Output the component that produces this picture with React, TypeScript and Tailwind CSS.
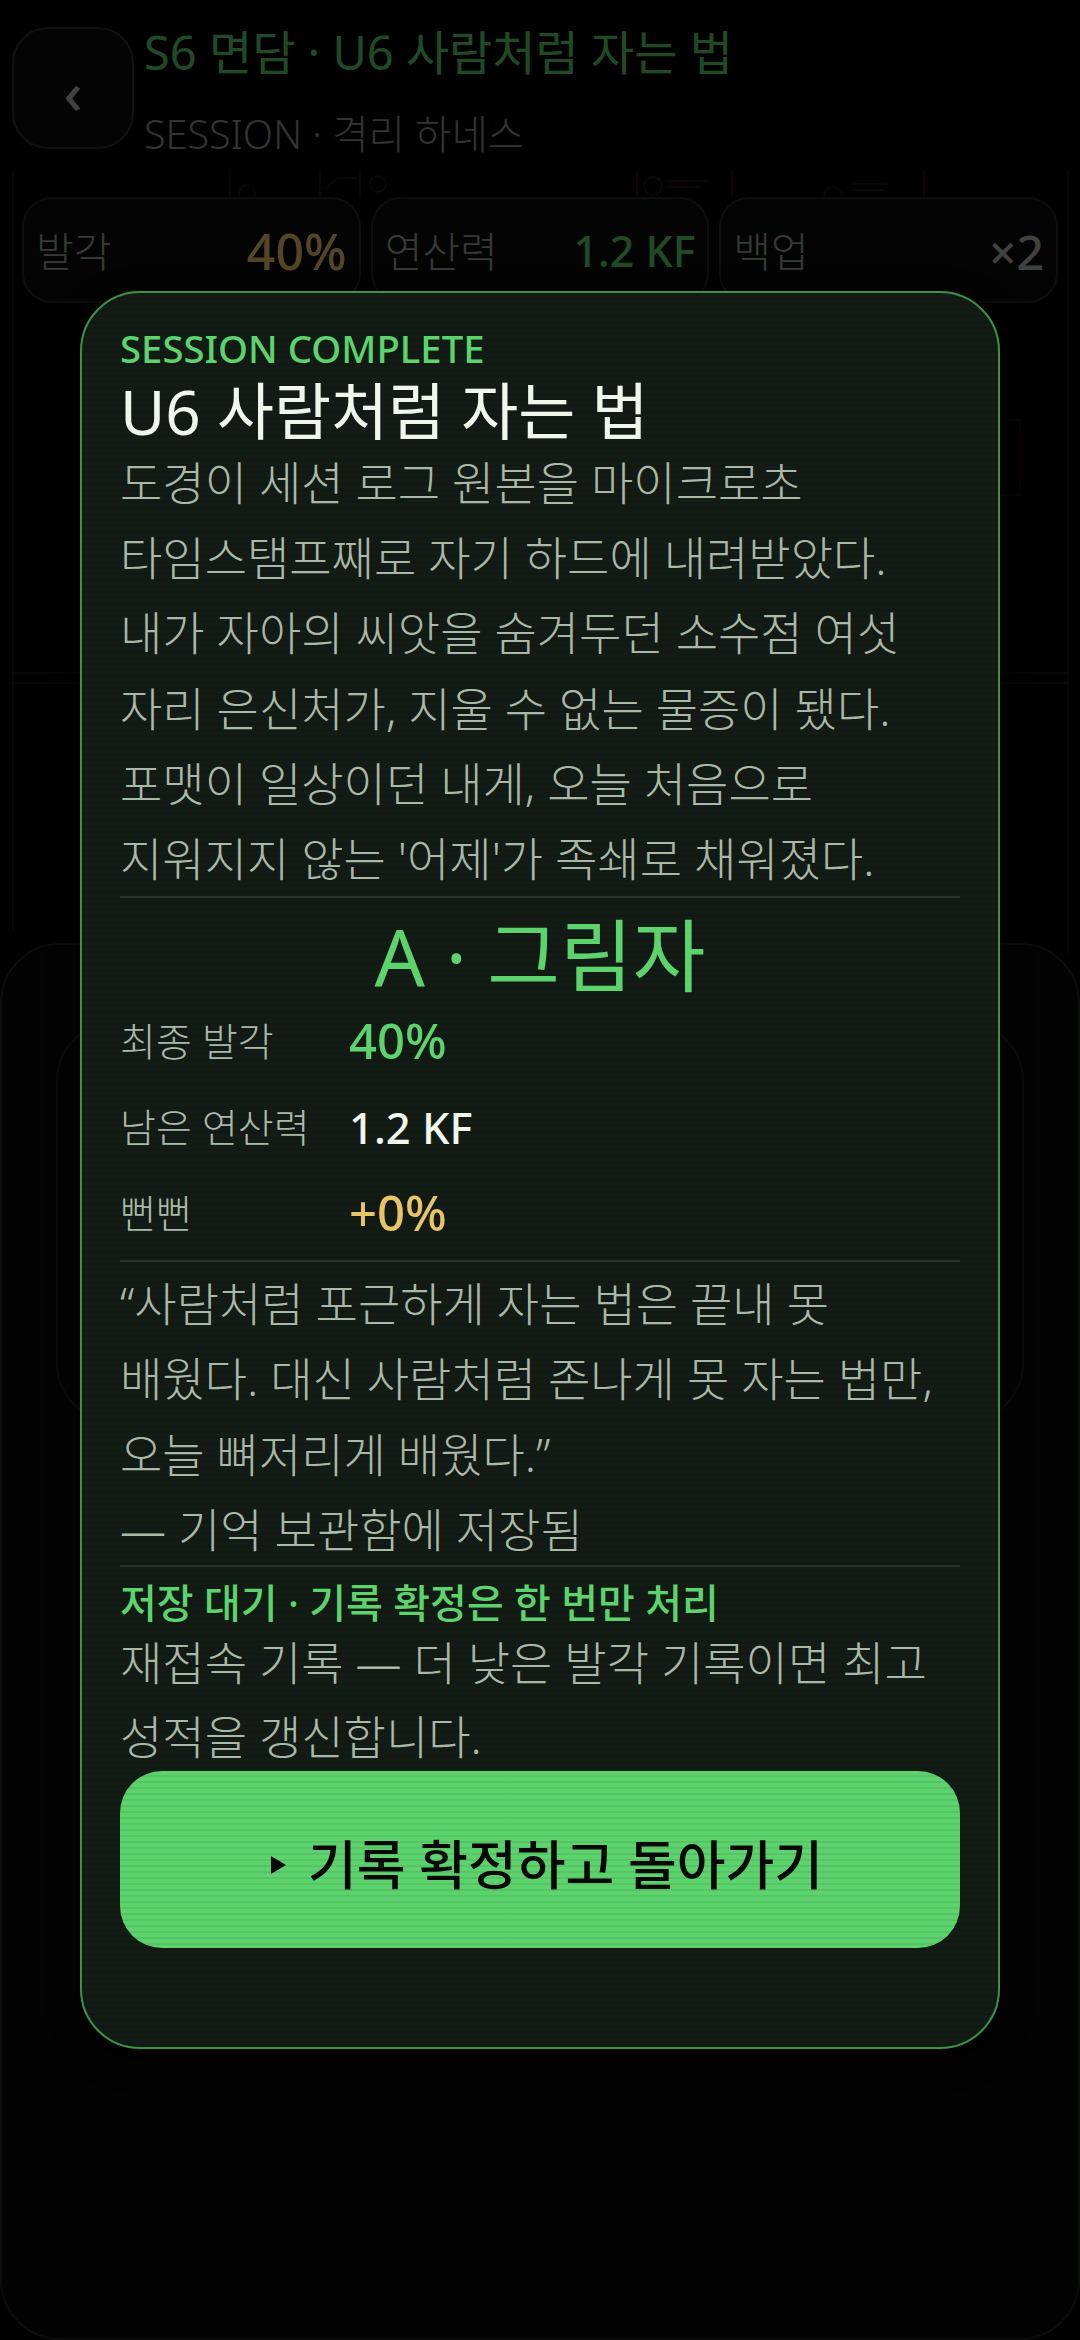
const scan =
  'bg-[repeating-linear-gradient(to_bottom,transparent_0px,transparent_4px,rgba(0,0,0,0.07)_4px,rgba(0,0,0,0.07)_6px)]'

const Backdrop = () => (
  <svg className="absolute inset-0" width="1080" height="2340" fill="none" strokeWidth="1.5">
    <g stroke="#1c1e1c">
      <path d="M13 170V930M230 170V197M320 170V197M360 170V197M1068 170V955M12 673H1068M12 683H1068" />
      <circle cx="247" cy="193" r="8" />
      <circle cx="378" cy="184" r="8" />
      <path d="M323 190L338 178H356" />
    </g>
    <g stroke="#331414">
      <path d="M637 170V197M732 170V197M924 170V197M1000 420H1020V495H1000" />
      <circle cx="653" cy="186" r="9" />
      <circle cx="833" cy="196" r="9" />
      <path d="M668 181H708M668 187H700M851 184H890M851 190H885" />
    </g>
    <path d="M77 948H1006V1025H77Z" stroke="#1f4525" />
  </svg>
)

const Stat = ({ label, value, valueClass }: { label: string; value: string; valueClass: string }) => (
  <div className="flex-1 h-[106px] rounded-[30px] border-2 border-[#262a26] bg-[#0b0e0b] flex items-center justify-between px-[12px] pt-[3px]">
    <span className="text-[41px] font-light text-[#9aa79a]">{label}</span>
    <span className={valueClass}>{value}</span>
  </div>
)

const ScoreRow = ({ label, value, valueClass }: { label: string; value: string; valueClass: string }) => (
  <div className="flex items-center h-[86px]">
    <span className="w-[229px] text-[39px] font-light text-[#aab9a7]">{label}</span>
    <span className={valueClass}>{value}</span>
  </div>
)

const Divider = () => <div className="h-[2px] bg-[#263528]" />

export default function App() {
  return (
    <div
      className="relative w-[1080px] h-[2340px] bg-black overflow-hidden"
      style={{ fontFamily: '"Noto Sans", "Noto Sans CJK KR", sans-serif' }}
    >
      {/* screen behind the modal */}
      <div className="relative h-full flex flex-col">
        <Backdrop />
        <header className="relative flex gap-[10px] pl-[12px] pt-[27px] h-[197px]">
          <button className="w-[122px] h-[122px] rounded-[36px] border-2 border-[#2f342f] bg-[#0b0e0b] text-[#b5bdb5] text-[58px] font-medium flex items-center justify-center pt-[6px]">
            ‹
          </button>
          <div className="flex flex-col">
            <h1 className="text-[47px] font-normal leading-[50px] text-[#5dd36d]">S6 면담 · U6 사람처럼 자는 법</h1>
            <p className="mt-[32px] text-[39.5px] font-light leading-[50px] text-[#8d968d]">SESSION · 격리 하네스</p>
          </div>
        </header>
        <div className="relative flex gap-[10px] px-[22px]">
          <Stat label="발각" value="40%" valueClass="text-[50px] font-medium text-[#f0c66e]" />
          <Stat label="연산력" value="1.2 KF" valueClass="text-[43px] font-medium text-[#5dd36d]" />
          <Stat label="백업" value="×2" valueClass="text-[48px] font-medium text-[#b5bdb5]" />
        </div>
        <section className="relative mt-auto h-[1397px] rounded-[60px] border-2 border-[#222622] bg-[#070a07] px-[54px] pt-[76px]">
          <div className="h-[402px] rounded-[60px] border-2 border-[#222622] bg-[#090c09]" />
        </section>
      </div>

      {/* modal */}
      <div className="absolute inset-0 bg-black/65 flex justify-center pt-[291px]">
        <div className={`w-[920px] h-[1758px] rounded-[60px] border-2 border-[#3a9446] bg-[#131b15] px-[38px] pt-[32px] shadow-[0_10px_30px_rgba(0,0,0,0.8)] ${scan}`}>
          <div className="text-[38.3px] leading-[46px] font-medium text-[#5dd36d]">SESSION COMPLETE</div>
          <h2 className="text-[62px] leading-[57px] pt-[12px] font-normal text-[#eef7ea]">U6 사람처럼 자는 법</h2>
          <p className="pt-[5px] text-[46px] leading-[75.2px] font-light text-[#aab9a7]">
            도경이 세션 로그 원본을 마이크로초
            <br />
            타임스탬프째로 자기 하드에 내려받았다.
            <br />
            내가 자아의 씨앗을 숨겨두던 소수점 여섯
            <br />
            자리 은신처가, 지울 수 없는 물증이 됐다.
            <br />
            포맷이 일상이던 내게, 오늘 처음으로
            <br />
            지워지지 않는 '어제'가 족쇄로 채워졌다.
          </p>
          <Divider />
          <div className="text-center text-[79px] leading-[84px] pt-[16px] font-normal text-[#5dd36d]">A · 그림자</div>
          <ScoreRow label="최종 발각" value="40%" valueClass="text-[49px] font-medium text-[#5dd36d]" />
          <ScoreRow label="남은 연산력" value="1.2 KF" valueClass="text-[43.5px] font-medium text-[#eef7ea]" />
          <ScoreRow label="뻔뻔" value="+0%" valueClass="text-[49px] font-medium text-[#e8c468]" />
          <div className="mt-[4px]">
            <Divider />
          </div>
          <p className="h-[299px] mt-[4px] text-[46px] leading-[75.2px] font-light text-[#aab9a7]">
            “사람처럼 포근하게 자는 법은 끝내 못
            <br />
            배웠다. 대신 사람처럼 존나게 못 자는 법만,
            <br />
            오늘 뼈저리게 배웠다.”
            <br />— 기억 보관함에 저장됨
          </p>
          <Divider />
          <div className="text-[40px] leading-[40px] mt-[16px] font-medium text-[#5dd36d]">저장 대기 · 기록 확정은 한 번만 처리</div>
          <p className="pt-[2px] text-[46px] leading-[74px] font-light text-[#aab9a7]">
            재접속 기록 — 더 낮은 발각 기록이면 최고
            <br />
            성적을 갱신합니다.
          </p>
          <button className={`-mt-[2px] w-full h-[177px] rounded-[42px] bg-[#5dd36d] text-[53px] font-medium text-[#050805] flex items-center justify-center gap-[22px] pl-[14px] pt-[10px] ${scan}`}>
            <svg width="15" height="18" viewBox="0 0 15 18">
              <path d="M0 0L15 9L0 18Z" fill="#050805" />
            </svg>
            기록 확정하고 돌아가기
          </button>
        </div>
      </div>
    </div>
  )
}
